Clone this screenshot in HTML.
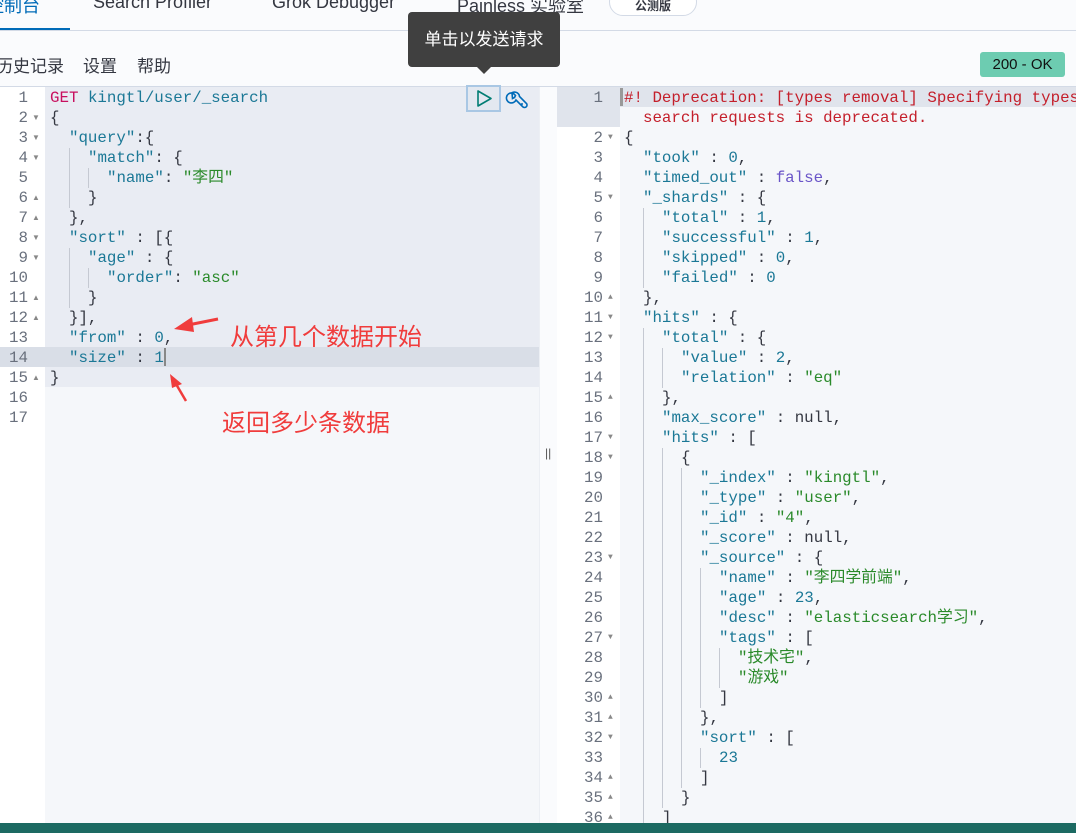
<!DOCTYPE html>
<html><head><meta charset="utf-8">
<style>
*{margin:0;padding:0;box-sizing:border-box}
body{width:1076px;height:833px;overflow:hidden;background:#fafbfd;font-family:"Liberation Sans","Noto Sans CJK SC",sans-serif;color:#343741;position:relative}
.tab{position:absolute;top:-8px;font-size:18px;color:#343741;white-space:nowrap}
.mono{font-family:"Liberation Mono","Noto Sans CJK SC",monospace;font-size:15.8px}
.ln{position:absolute;height:20px;line-height:20px;white-space:pre;margin-top:1px}
.num{position:absolute;height:20px;line-height:20px;text-align:right;color:#69707d;font-family:"Liberation Mono",monospace;font-size:15.8px;margin-top:1px}
.f{position:absolute;font-size:8px;color:#888;line-height:20px;height:20px;margin-top:1px}
i{display:inline-block;width:19px;height:20px;border-left:1px solid #c5c9d2;vertical-align:top}
.k{color:#1b7896}.s{color:#2a8a2a}.n{color:#1b7896}.b{color:#6a55c8}.r{color:#c41f2b}.get{color:#c8105f}.p{color:#343741}
.ann{position:absolute;color:#f03c3c;font-size:24px;white-space:nowrap}
</style></head><body>
<div class="tab" style="left:-14px;color:#006bb8">控制台</div>
<div style="position:absolute;left:0;top:28px;width:70px;height:3px;background:#006bb8"></div>
<div style="position:absolute;left:0;top:30px;width:1076px;height:1px;background:#d3dae6"></div>
<div class="tab" style="left:93px">Search Profiler</div>
<div class="tab" style="left:272px">Grok Debugger</div>
<div class="tab" style="left:457px">Painless 实验室</div>
<div style="position:absolute;left:609px;top:-12px;width:88px;height:28px;border:1px solid #d3dae6;border-radius:14px;background:#fff;font-size:12px;font-weight:bold;text-align:center;line-height:34px">公测版</div>
<div style="position:absolute;left:-4px;top:52px;font-size:17px">历史记录</div>
<div style="position:absolute;left:83px;top:52px;font-size:17px">设置</div>
<div style="position:absolute;left:137px;top:52px;font-size:17px">帮助</div>
<div style="position:absolute;left:980px;top:52px;width:85px;height:25px;background:#6dccb1;border-radius:3px;font-size:15px;text-align:center;line-height:25px;color:#111">200 - OK</div>
<div style="position:absolute;left:0;top:86px;width:557px;height:737px;background:#fff"></div>
<div style="position:absolute;left:0;top:86px;width:1076px;height:1px;background:#d3dae6"></div>
<div style="position:absolute;left:45px;top:87px;width:494px;height:736px;background:#f5f7fa"></div>
<div style="position:absolute;left:45px;top:87px;width:494px;height:300px;background:#e9ecf3"></div>
<div style="position:absolute;left:0;top:347px;width:539px;height:20px;background:#d9dee7"></div>
<div style="position:absolute;left:539px;top:87px;width:18px;height:736px;background:#fafbfd;border-left:1px solid #eceff4"></div>
<div style="position:absolute;left:545px;top:446px;font-size:12px;color:#555">||</div>
<div class="num" style="left:0;width:28px;top:87px">1</div>
<div class="num" style="left:0;width:28px;top:107px">2</div><div class="f" style="left:32px;top:107px">▼</div>
<div class="num" style="left:0;width:28px;top:127px">3</div><div class="f" style="left:32px;top:127px">▼</div>
<div class="num" style="left:0;width:28px;top:147px">4</div><div class="f" style="left:32px;top:147px">▼</div>
<div class="num" style="left:0;width:28px;top:167px">5</div>
<div class="num" style="left:0;width:28px;top:187px">6</div><div class="f" style="left:32px;top:187px">▲</div>
<div class="num" style="left:0;width:28px;top:207px">7</div><div class="f" style="left:32px;top:207px">▲</div>
<div class="num" style="left:0;width:28px;top:227px">8</div><div class="f" style="left:32px;top:227px">▼</div>
<div class="num" style="left:0;width:28px;top:247px">9</div><div class="f" style="left:32px;top:247px">▼</div>
<div class="num" style="left:0;width:28px;top:267px">10</div>
<div class="num" style="left:0;width:28px;top:287px">11</div><div class="f" style="left:32px;top:287px">▲</div>
<div class="num" style="left:0;width:28px;top:307px">12</div><div class="f" style="left:32px;top:307px">▲</div>
<div class="num" style="left:0;width:28px;top:327px">13</div>
<div class="num" style="left:0;width:28px;top:347px">14</div>
<div class="num" style="left:0;width:28px;top:367px">15</div><div class="f" style="left:32px;top:367px">▲</div>
<div class="num" style="left:0;width:28px;top:387px">16</div>
<div class="num" style="left:0;width:28px;top:407px">17</div>
<div class="mono">
<div class="ln" style="left:50px;top:87px"><span class="get">GET</span> <span class="k">kingtl/user/_search</span></div>
<div class="ln" style="left:50px;top:107px">{</div>
<div class="ln" style="left:50px;top:127px">  <span class="k">"query"</span>:{</div>
<div class="ln" style="left:50px;top:147px">  <i></i><span class="k">"match"</span>: {</div>
<div class="ln" style="left:50px;top:167px">  <i></i><i></i><span class="k">"name"</span>: <span class="s">"李四"</span></div>
<div class="ln" style="left:50px;top:187px">  <i></i>}</div>
<div class="ln" style="left:50px;top:207px">  },</div>
<div class="ln" style="left:50px;top:227px">  <span class="k">"sort"</span> : [{</div>
<div class="ln" style="left:50px;top:247px">  <i></i><span class="k">"age"</span> : {</div>
<div class="ln" style="left:50px;top:267px">  <i></i><i></i><span class="k">"order"</span>: <span class="s">"asc"</span></div>
<div class="ln" style="left:50px;top:287px">  <i></i>}</div>
<div class="ln" style="left:50px;top:307px">  }],</div>
<div class="ln" style="left:50px;top:327px">  <span class="k">"from"</span> : <span class="n">0</span>,</div>
<div class="ln" style="left:50px;top:347px">  <span class="k">"size"</span> : <span class="n">1</span></div>
<div class="ln" style="left:50px;top:367px">}</div>
</div>
<div style="position:absolute;left:164px;top:348px;width:2px;height:18px;background:#888"></div>
<div style="position:absolute;left:466px;top:85px;width:35px;height:27px;border:2px solid #a9c7e4;background:#e3e8f0"></div>
<svg style="position:absolute;left:466px;top:85px" width="70" height="28"><path d="M12 6 L12 21 L25 13.5 Z" fill="none" stroke="#017d73" stroke-width="1.6" stroke-linejoin="round"/>
<path d="M46 8 a5 5 0 1 0 4 7 l7 7 a2.5 2.5 0 0 0 3.5 -3.5 l-7 -7 a5 5 0 0 0 -7 -4 l3 3 -1 2 -2 1 z" fill="none" stroke="#006bb8" stroke-width="1.6"/><circle cx="56" cy="19" r="1" fill="#006bb8"/></svg>
<div style="position:absolute;left:408px;top:12px;width:152px;height:55px;background:#404040;border-radius:4px;color:#fff;font-size:17px;line-height:55px;text-align:center">单击以发送请求</div>
<div style="position:absolute;left:476px;top:66px;width:0;height:0;border-left:8px solid transparent;border-right:8px solid transparent;border-top:8px solid #404040"></div>
<svg style="position:absolute;left:0;top:0" width="560" height="420">
<path d="M218 319 L188 325" stroke="#f03c3c" stroke-width="3"/><path d="M174 329 L192 317 L194 332 Z" fill="#f03c3c"/>
<path d="M186 401 L176 384" stroke="#f03c3c" stroke-width="2.5"/><path d="M170 374 L182 384 L172 388 Z" fill="#f03c3c"/>
</svg>
<div class="ann" style="left:230px;top:317px">从第几个数据开始</div>
<div class="ann" style="left:222px;top:403px">返回多少条数据</div>
<div style="position:absolute;left:557px;top:87px;width:519px;height:736px;background:#fff"></div>
<div style="position:absolute;left:620px;top:87px;width:456px;height:736px;background:#f5f7fa"></div>
<div style="position:absolute;left:557px;top:87px;width:63px;height:40px;background:#e0e4ec"></div>
<div style="position:absolute;left:620px;top:87px;width:456px;height:20px;background:#e0e4ec"></div>
<div style="position:absolute;left:620px;top:88px;width:3px;height:18px;background:#999"></div>
<div class="mono">
<div class="num" style="left:557px;width:46px;top:87px">1</div>
<div class="num" style="left:557px;width:46px;top:127px">2</div><div class="f" style="left:608px;top:127px">▼</div>
<div class="num" style="left:557px;width:46px;top:147px">3</div>
<div class="num" style="left:557px;width:46px;top:167px">4</div>
<div class="num" style="left:557px;width:46px;top:187px">5</div><div class="f" style="left:608px;top:187px">▼</div>
<div class="num" style="left:557px;width:46px;top:207px">6</div>
<div class="num" style="left:557px;width:46px;top:227px">7</div>
<div class="num" style="left:557px;width:46px;top:247px">8</div>
<div class="num" style="left:557px;width:46px;top:267px">9</div>
<div class="num" style="left:557px;width:46px;top:287px">10</div><div class="f" style="left:608px;top:287px">▲</div>
<div class="num" style="left:557px;width:46px;top:307px">11</div><div class="f" style="left:608px;top:307px">▼</div>
<div class="num" style="left:557px;width:46px;top:327px">12</div><div class="f" style="left:608px;top:327px">▼</div>
<div class="num" style="left:557px;width:46px;top:347px">13</div>
<div class="num" style="left:557px;width:46px;top:367px">14</div>
<div class="num" style="left:557px;width:46px;top:387px">15</div><div class="f" style="left:608px;top:387px">▲</div>
<div class="num" style="left:557px;width:46px;top:407px">16</div>
<div class="num" style="left:557px;width:46px;top:427px">17</div><div class="f" style="left:608px;top:427px">▼</div>
<div class="num" style="left:557px;width:46px;top:447px">18</div><div class="f" style="left:608px;top:447px">▼</div>
<div class="num" style="left:557px;width:46px;top:467px">19</div>
<div class="num" style="left:557px;width:46px;top:487px">20</div>
<div class="num" style="left:557px;width:46px;top:507px">21</div>
<div class="num" style="left:557px;width:46px;top:527px">22</div>
<div class="num" style="left:557px;width:46px;top:547px">23</div><div class="f" style="left:608px;top:547px">▼</div>
<div class="num" style="left:557px;width:46px;top:567px">24</div>
<div class="num" style="left:557px;width:46px;top:587px">25</div>
<div class="num" style="left:557px;width:46px;top:607px">26</div>
<div class="num" style="left:557px;width:46px;top:627px">27</div><div class="f" style="left:608px;top:627px">▼</div>
<div class="num" style="left:557px;width:46px;top:647px">28</div>
<div class="num" style="left:557px;width:46px;top:667px">29</div>
<div class="num" style="left:557px;width:46px;top:687px">30</div><div class="f" style="left:608px;top:687px">▲</div>
<div class="num" style="left:557px;width:46px;top:707px">31</div><div class="f" style="left:608px;top:707px">▲</div>
<div class="num" style="left:557px;width:46px;top:727px">32</div><div class="f" style="left:608px;top:727px">▼</div>
<div class="num" style="left:557px;width:46px;top:747px">33</div>
<div class="num" style="left:557px;width:46px;top:767px">34</div><div class="f" style="left:608px;top:767px">▲</div>
<div class="num" style="left:557px;width:46px;top:787px">35</div><div class="f" style="left:608px;top:787px">▲</div>
<div class="num" style="left:557px;width:46px;top:807px">36</div><div class="f" style="left:608px;top:807px">▲</div>

<div class="ln r" style="left:624px;top:87px">#! Deprecation: [types removal] Specifying types in</div>
<div class="ln r" style="left:624px;top:107px">  search requests is deprecated.</div>
<div class="ln" style="left:624px;top:127px">{</div>
<div class="ln" style="left:624px;top:147px">  <span class="k">"took"</span> : <span class="n">0</span>,</div>
<div class="ln" style="left:624px;top:167px">  <span class="k">"timed_out"</span> : <span class="b">false</span>,</div>
<div class="ln" style="left:624px;top:187px">  <span class="k">"_shards"</span> : {</div>
<div class="ln" style="left:624px;top:207px">  <i></i><span class="k">"total"</span> : <span class="n">1</span>,</div>
<div class="ln" style="left:624px;top:227px">  <i></i><span class="k">"successful"</span> : <span class="n">1</span>,</div>
<div class="ln" style="left:624px;top:247px">  <i></i><span class="k">"skipped"</span> : <span class="n">0</span>,</div>
<div class="ln" style="left:624px;top:267px">  <i></i><span class="k">"failed"</span> : <span class="n">0</span></div>
<div class="ln" style="left:624px;top:287px">  },</div>
<div class="ln" style="left:624px;top:307px">  <span class="k">"hits"</span> : {</div>
<div class="ln" style="left:624px;top:327px">  <i></i><span class="k">"total"</span> : {</div>
<div class="ln" style="left:624px;top:347px">  <i></i><i></i><span class="k">"value"</span> : <span class="n">2</span>,</div>
<div class="ln" style="left:624px;top:367px">  <i></i><i></i><span class="k">"relation"</span> : <span class="s">"eq"</span></div>
<div class="ln" style="left:624px;top:387px">  <i></i>},</div>
<div class="ln" style="left:624px;top:407px">  <i></i><span class="k">"max_score"</span> : null,</div>
<div class="ln" style="left:624px;top:427px">  <i></i><span class="k">"hits"</span> : [</div>
<div class="ln" style="left:624px;top:447px">  <i></i><i></i>{</div>
<div class="ln" style="left:624px;top:467px">  <i></i><i></i><i></i><span class="k">"_index"</span> : <span class="s">"kingtl"</span>,</div>
<div class="ln" style="left:624px;top:487px">  <i></i><i></i><i></i><span class="k">"_type"</span> : <span class="s">"user"</span>,</div>
<div class="ln" style="left:624px;top:507px">  <i></i><i></i><i></i><span class="k">"_id"</span> : <span class="s">"4"</span>,</div>
<div class="ln" style="left:624px;top:527px">  <i></i><i></i><i></i><span class="k">"_score"</span> : null,</div>
<div class="ln" style="left:624px;top:547px">  <i></i><i></i><i></i><span class="k">"_source"</span> : {</div>
<div class="ln" style="left:624px;top:567px">  <i></i><i></i><i></i><i></i><span class="k">"name"</span> : <span class="s">"李四学前端"</span>,</div>
<div class="ln" style="left:624px;top:587px">  <i></i><i></i><i></i><i></i><span class="k">"age"</span> : <span class="n">23</span>,</div>
<div class="ln" style="left:624px;top:607px">  <i></i><i></i><i></i><i></i><span class="k">"desc"</span> : <span class="s">"elasticsearch学习"</span>,</div>
<div class="ln" style="left:624px;top:627px">  <i></i><i></i><i></i><i></i><span class="k">"tags"</span> : [</div>
<div class="ln" style="left:624px;top:647px">  <i></i><i></i><i></i><i></i><i></i><span class="s">"技术宅"</span>,</div>
<div class="ln" style="left:624px;top:667px">  <i></i><i></i><i></i><i></i><i></i><span class="s">"游戏"</span></div>
<div class="ln" style="left:624px;top:687px">  <i></i><i></i><i></i><i></i>]</div>
<div class="ln" style="left:624px;top:707px">  <i></i><i></i><i></i>},</div>
<div class="ln" style="left:624px;top:727px">  <i></i><i></i><i></i><span class="k">"sort"</span> : [</div>
<div class="ln" style="left:624px;top:747px">  <i></i><i></i><i></i><i></i><span class="n">23</span></div>
<div class="ln" style="left:624px;top:767px">  <i></i><i></i><i></i>]</div>
<div class="ln" style="left:624px;top:787px">  <i></i><i></i>}</div>
<div class="ln" style="left:624px;top:807px">  <i></i>]</div>
</div>
<div style="position:absolute;left:0;top:823px;width:1076px;height:10px;background:#1c6a62"></div>
</body></html>
